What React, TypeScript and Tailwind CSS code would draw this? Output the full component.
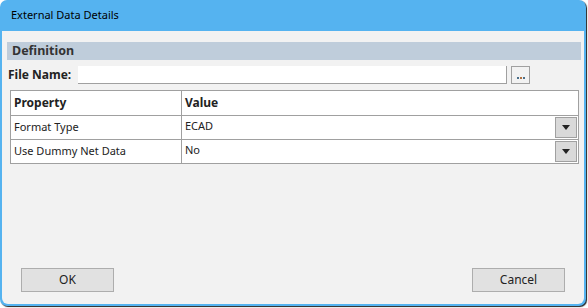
const font = { fontFamily: '"Segoe UI", "Noto Sans", "Open Sans", sans-serif' };

const rows = [
  { name: "Format Type", value: "ECAD" },
  { name: "Use Dummy Net Data", value: "No" },
];

function DropButton() {
  return (
    <div className="w-[22px] h-[21px] bg-[#d9d9d9] border border-[#a0a0a0] flex items-center justify-center">
      <svg width="8" height="5" viewBox="0 0 8 5">
        <path d="M0 0 H8 L4 5 Z" fill="#222" />
      </svg>
    </div>
  );
}

const App = () => {
  return (
    <div className="w-[588px] h-[308px] bg-white" style={font}>
      <div className="w-[586px] h-[306px] rounded-[7px] bg-[#55b3f0] px-[2px] pb-[2px] flex flex-col shadow-[1px_1px_1px_#222]">
        {/* Title bar */}
        <div className="h-[31px] flex items-center pl-[9px] text-[11px] text-black">
          External Data Details
        </div>

        {/* Body */}
        <div className="flex-1 bg-[#f2f2f2] rounded-b-[6px] flex flex-col pt-[11px] pl-[5px] pr-[3px]">
          <div className="h-[18px] bg-[#bfcddb] flex items-center pl-[5px] text-[12.5px] font-bold text-[#333]">
            Definition
          </div>

          {/* File name */}
          <div className="flex items-center mt-[6px] h-[18px]">
            <span className="text-[12px] font-bold text-[#222] w-[70px] ml-[1px]">File Name:</span>
            <div className="w-[429px] h-[18px] bg-white border-r border-b border-[#a0a0a0]" />
            <div className="ml-[4px] w-[19px] h-[18px] border border-[#a0a0a0] flex items-end justify-center pb-[4px]">
              <div className="flex gap-[1px]">
                <div className="w-[2px] h-[2px] bg-[#4a6f8a]" />
                <div className="w-[2px] h-[2px] bg-[#b07040]" />
                <div className="w-[2px] h-[2px] bg-[#4a6f8a]" />
              </div>
            </div>
          </div>

          {/* Property grid */}
          <div className="ml-[3px] mt-[6px] w-[569px] border border-[#a0a0a0] bg-white text-[11px] text-[#222]">
            <div className="flex h-[24px] text-[12px]">
              <div className="w-[171px] border-r border-[#a0a0a0] flex items-center pl-[3px] font-bold">Property</div>
              <div className="flex-1 flex items-center pl-[3px] font-bold">Value</div>
            </div>
            {rows.map((r, i) => (
              <div key={i} className="flex h-[24px] border-t border-[#a0a0a0]">
                <div className="w-[171px] border-r border-[#a0a0a0] flex items-center pl-[3px]">{r.name}</div>
                <div className="flex-1 flex items-center justify-between pl-[3px] pr-[1px]">
                  <span className="-mt-[3px]">{r.value}</span>
                  <DropButton />
                </div>
              </div>
            ))}
          </div>

          <div className="flex-1" />

          {/* Buttons */}
          <div className="flex justify-between pl-[14px] pr-[16px] mb-[12px]">
            <button className="w-[93px] h-[24px] bg-[#e1e1e1] border border-[#adadad] text-[12px] text-[#222]">OK</button>
            <button className="w-[93px] h-[24px] bg-[#e1e1e1] border border-[#adadad] text-[12px] text-[#222]">Cancel</button>
          </div>
        </div>
      </div>
    </div>
  );
};

export default App;
